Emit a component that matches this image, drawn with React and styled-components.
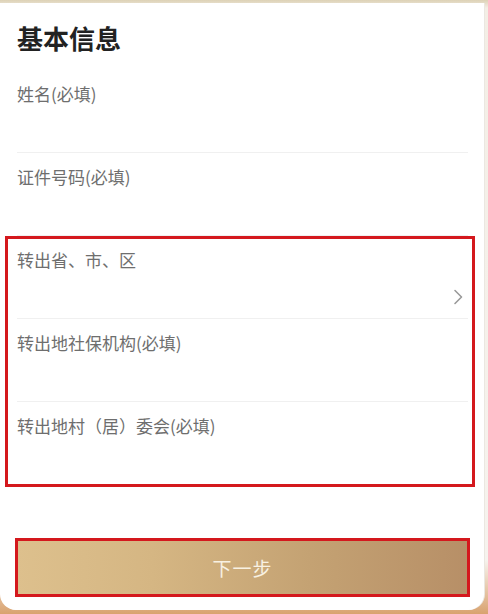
import React from 'react';
import styled, { createGlobalStyle } from 'styled-components';

const GlobalStyle = createGlobalStyle`
  html, body {
    margin: 0;
    padding: 0;
  }
  body {
    width: 488px;
    height: 614px;
    overflow: hidden;
    font-family: "Noto Sans CJK SC", "Noto Sans", sans-serif;
    background: linear-gradient(to bottom, #ddd2b6 0, #f3eee5 8px, #f6f3ee 560px, #d9a26f 614px);
  }
`;

const Page = styled.div`
  height: 614px;
  padding: 3px 4px 4px 0;
  box-sizing: border-box;
`;

const Card = styled.div`
  height: 100%;
  box-sizing: border-box;
  background: #fff;
  border-radius: 0 0 16px 16px;
  padding: 17px 16px 0 17px;
  box-shadow: 1px 0 0 #ebe7e1;
`;

const Title = styled.h1`
  margin: 0;
  font-size: 26px;
  line-height: 36px;
  font-weight: 700;
  color: #222;
`;

const Form = styled.div`
  margin-top: 14px;
`;

const Row = styled.div`
  display: flex;
  flex-direction: column;
  padding: 12px 0 6px;
  height: 83px;
  box-sizing: border-box;
  border-bottom: 1px solid ${props => (props.$last ? 'transparent' : '#f0f0f0')};
`;

const Label = styled.div`
  font-size: 17px;
  line-height: 24px;
  color: #6e6e6e;
`;

const Value = styled.div`
  margin-top: 10px;
  height: 30px;
  display: flex;
  align-items: center;
  justify-content: flex-end;
  padding-right: 5px;
`;

// red annotation frame drawn over a block
const Marked = styled.div`
  position: relative;

  &::after {
    content: '';
    position: absolute;
    top: ${props => props.$top || '0px'};
    bottom: ${props => props.$bottom || '0px'};
    left: ${props => props.$left || '0px'};
    right: ${props => props.$right || '0px'};
    border: 3px solid #d4181d;
    pointer-events: none;
  }
`;

const NextButton = styled.button`
  display: block;
  width: 100%;
  height: 55px;
  margin-top: 55px;
  padding: 0 0 1px;
  border: none;
  border-radius: 2px;
  background: linear-gradient(to right, #ddc08d 0%, #d5b683 30%, #c4a273 65%, #b78f67 100%);
  color: #f8f1e2;
  font-family: "Noto Sans CJK SC", "Noto Sans", sans-serif;
  font-size: 19px;
  letter-spacing: 1px;
  cursor: pointer;
`;

const Chevron = () => (
  <svg width="10" height="16" viewBox="0 0 10 16" fill="none">
    <path d="M2 1.5 L8.5 8 L2 14.5" stroke="#9a9a9a" strokeWidth="1.6" strokeLinecap="round" strokeLinejoin="round" />
  </svg>
);

export default function App() {
  return (
    <>
      <GlobalStyle />
      <Page>
        <Card>
          <Title>基本信息</Title>
          <Form>
            <Row>
              <Label>姓名(必填)</Label>
            </Row>
            <Row>
              <Label>证件号码(必填)</Label>
            </Row>
            <Marked $left="-12px" $right="-7px" $bottom="-2px">
              <Row>
                <Label>转出省、市、区</Label>
                <Value>
                  <Chevron />
                </Value>
              </Row>
              <Row>
                <Label>转出地社保机构(必填)</Label>
              </Row>
              <Row $last>
                <Label>转出地村（居）委会(必填)</Label>
              </Row>
            </Marked>
          </Form>
          <Marked $left="-2px" $right="-2px" $top="-2px" $bottom="-2px">
            <NextButton type="button">下一步</NextButton>
          </Marked>
        </Card>
      </Page>
    </>
  );
}
